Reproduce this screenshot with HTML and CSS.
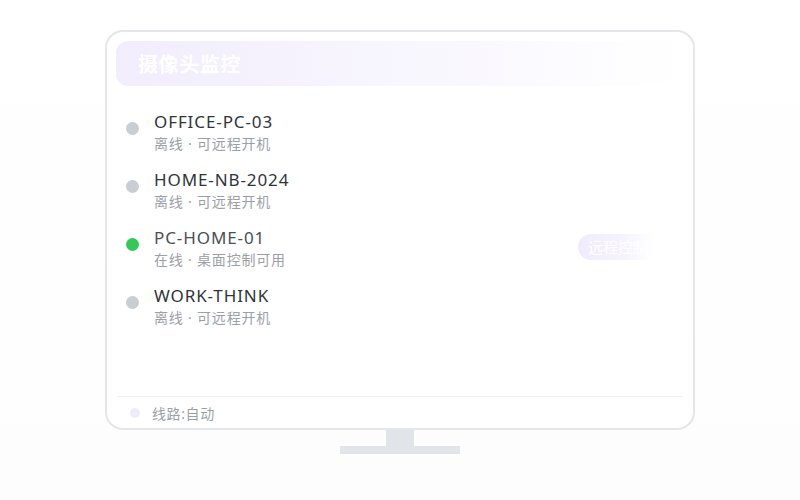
FILE: index.html
```html
<!DOCTYPE html>
<html lang="zh-CN">
<head>
<meta charset="utf-8">
<link rel="stylesheet" href="styles.css">
</head>
<body>
<div class="scene">
  <div class="monitor">
    <div class="header"><span class="title">摄像头监控</span></div>
    <div class="list">
      <div class="row">
        <span class="dot off"></span>
        <div class="info"><div class="name">OFFICE-PC-03</div><div class="sub">离线 · 可远程开机</div></div>
      </div>
      <div class="row">
        <span class="dot off"></span>
        <div class="info"><div class="name">HOME-NB-2024</div><div class="sub">离线 · 可远程开机</div></div>
      </div>
      <div class="row">
        <span class="dot on"></span>
        <div class="info"><div class="name active">PC-HOME-01</div><div class="sub">在线 · 桌面控制可用</div></div>
        <span class="btn">远程控制</span>
      </div>
      <div class="row">
        <span class="dot off"></span>
        <div class="info"><div class="name">WORK-THINK</div><div class="sub">离线 · 可远程开机</div></div>
      </div>
    </div>
    <div class="footer"><span class="fdot"></span><span class="ftext">线路:自动</span></div>
  </div>
  <div class="neck"></div>
  <div class="base"></div>
</div>
</body>
</html>
```
FILE: styles.css
```css
html, body { margin: 0; padding: 0; }
body {
  width: 800px; height: 500px; overflow: hidden;
  background: linear-gradient(#ffffff, #fdfdfd);
  font-family: "Noto Sans", "Noto Sans CJK SC", sans-serif;
}
.scene { display: flex; flex-direction: column; align-items: center; padding-top: 30px; }
.monitor {
  box-sizing: border-box; width: 590px; height: 400px;
  border: 2px solid #e4e6ea; border-radius: 18px; background: #fff;
  padding: 9px 9px 0; display: flex; flex-direction: column;
}
.header {
  height: 45px; border-radius: 12px; display: flex; align-items: center;
  padding-left: 22px;
  background: linear-gradient(90deg, #f1edfd 0%, #f8f6fe 50%, #fdfcff 85%, #ffffff 100%);
}
.title { color: #fff; font-size: 20px; font-weight: 700; letter-spacing: 0.6px; }
.list { flex: 1; padding: 25px 0 0 10px; display: flex; flex-direction: column; gap: 16px; }
.row { display: flex; align-items: flex-start; }
.dot { width: 13px; height: 13px; border-radius: 50%; margin-top: 11px; flex: none; }
.dot.off { background: #c9cdd4; }
.dot.on { background: #35c75a; }
.info { margin-left: 15px; flex: 1; }
.name { font-size: 17px; line-height: 22px; color: #30343a; letter-spacing: 0.9px; }
.name.active { color: #4a4f57; }
.sub { font-size: 14px; line-height: 18px; margin-top: 2px; color: #9ba0a8; letter-spacing: 0.8px; }
.btn {
  margin-top: 7px; margin-right: 22px; height: 26px; width: 84px; box-sizing: border-box;
  padding-left: 10px; border-radius: 13px; line-height: 26px; font-size: 15px; color: #fff;
  background: linear-gradient(90deg, #efebfd 0%, #f6f3fe 55%, #ffffff 90%);
}
.footer {
  height: 31px; margin: 0 1px; border-top: 1px solid #eef0f3;
  display: flex; align-items: center; padding-left: 13px;
}
.fdot { width: 10px; height: 10px; border-radius: 50%; background: #eeeafc; }
.ftext { margin-left: 12px; font-size: 14px; color: #9a9fa7; letter-spacing: 0.6px; }
.neck { width: 28px; height: 16px; background: #e1e4e8; }
.base { width: 120px; height: 8px; background: #e1e4e8; }
```
